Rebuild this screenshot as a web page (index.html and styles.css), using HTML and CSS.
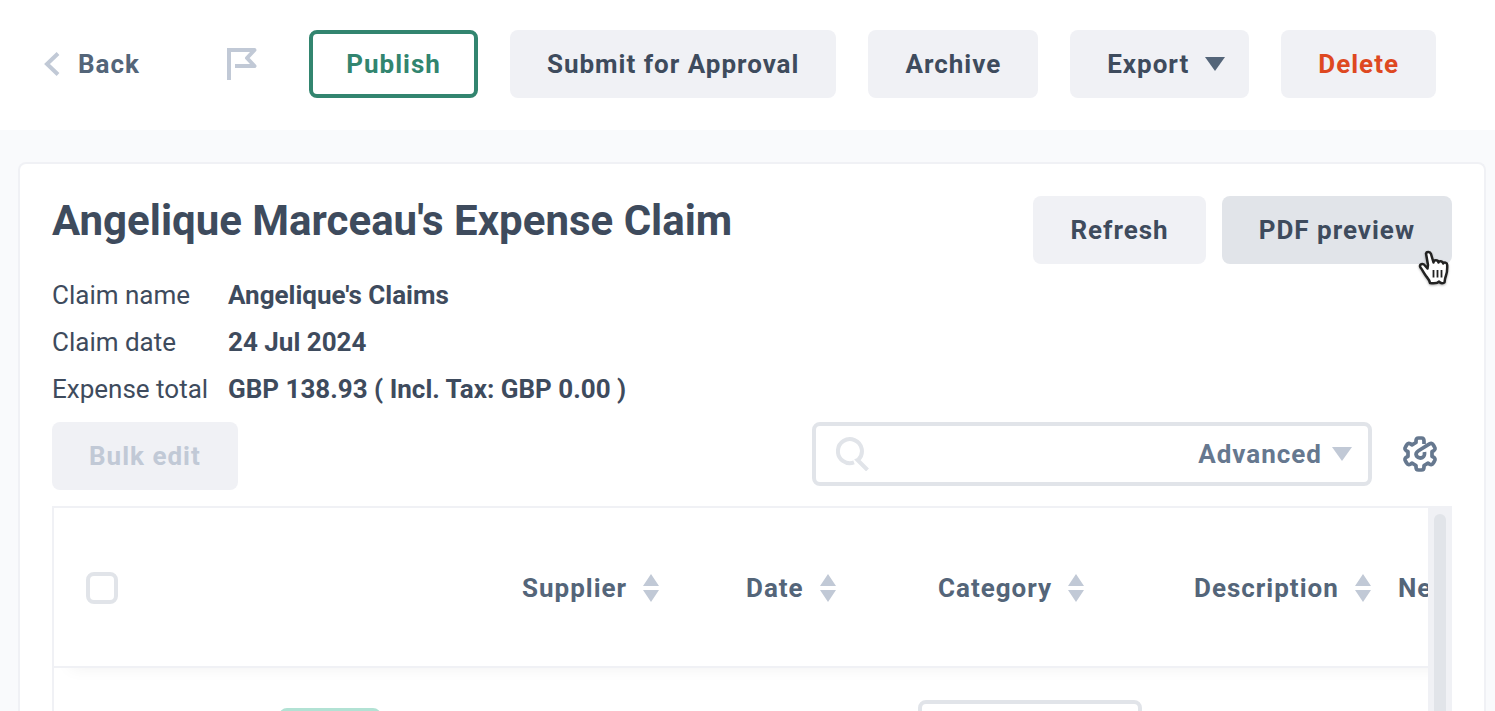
FILE: index.html
```html
<!DOCTYPE html>
<html lang="en">
<head>
    <meta charset="UTF-8">
    <meta name="viewport" content="width=device-width, initial-scale=1.0">
    <title>Expense Claim</title>
    <link rel="stylesheet" href="styles.css">
</head>
<body>
    <header class="topbar">
        <a class="back" href="#">
            <svg width="16" height="24" viewBox="0 0 16 24" fill="none" stroke="#c1c9d6" stroke-width="4"><path d="M14 1.500L3 12l11 10.500"/></svg>
            Back
        </a>
        <button class="icon-btn" type="button" aria-label="Flag">
            <svg width="30" height="32" viewBox="0 0 30 32" fill="none" stroke="#c1c9d6" stroke-width="4" stroke-linejoin="round"><path d="M2 32V2H27.500L20 10l7.500 8H8"/><path d="M0 0h8v4H0z" fill="#c1c9d6" stroke="none"/></svg>
        </button>
        <div class="actions">
            <button class="btn btn-publish" type="button">Publish</button>
            <button class="btn" type="button">Submit for Approval</button>
            <button class="btn" type="button">Archive</button>
            <button class="btn btn-menu" type="button">Export
                <svg width="20" height="14" viewBox="0 0 20 14"><path d="M0 0h20L10 14z" fill="#546579"/></svg>
            </button>
            <button class="btn btn-delete" type="button">Delete</button>
        </div>
    </header>

    <main class="card">
        <div class="card-head">
            <h1>Angelique Marceau's Expense Claim</h1>
            <div class="card-buttons">
                <button class="btn" type="button">Refresh</button>
                <button class="btn btn-active" type="button">PDF preview
                    <svg class="pointer" width="32" height="36" viewBox="0 0 32 36"><path d="M8 3.500C8.500 1.500 12 1.500 13 4l2.500 8.500c0-3 4.500-3 5 0 .5-2 4.200-1.700 4.700 1 .8-1.700 4 -1.200 4 1.500 0 4 .3 7-1.200 10.500-1 2.500-1.200 3-1.500 7-2 1-4 1-5.500-1-1.500 2-5 2-9 1.500-.5-3-2-4.500-4-7C5.500 22.500 4.500 20 2.500 17.500 1 15 3.500 13 6 14.500l3.500 4L10 15z" fill="#fff" stroke="#222" stroke-width="2.500" stroke-linejoin="round"/><path d="M15.500 20v7.500M19.500 20v7.500M23.500 20v7.500" stroke="#222" stroke-width="1.800"/></svg>
                </button>
            </div>
        </div>

        <dl class="details">
            <dt>Claim name</dt>
            <dd>Angelique's Claims</dd>
            <dt>Claim date</dt>
            <dd>24 Jul 2024</dd>
            <dt>Expense total</dt>
            <dd>GBP 138.93 ( Incl. Tax: GBP 0.00 )</dd>
        </dl>

        <div class="toolbar">
            <button class="btn" type="button" disabled>Bulk edit</button>
            <div class="toolbar-right">
                <div class="search">
                    <svg width="34" height="34" viewBox="0 0 34 34" fill="none" stroke="#e1e4e9" stroke-width="4"><path d="M18 25.400A12 12 0 1 1 22.500 22.500l-1 .5 10 10"/></svg>
                    <input type="text" aria-label="Search items">
                    <button class="advanced" type="button">Advanced
                        <svg width="20" height="14" viewBox="0 0 20 14"><path d="M0 0h20L10 14z" fill="#c1c9d6"/></svg>
                    </button>
                </div>
                <button class="icon-btn" type="button" aria-label="Settings">
                    <svg width="36" height="36" viewBox="-18 -18 36 36" fill="none" stroke="#66788f" stroke-width="3.700" stroke-linejoin="round"><path d="M4 -10V-13Q4 -16 1.500 -16H-1.500Q-4 -16 -4 -13V-11.500L-8 -9.200L-9.500 -10.100Q-12 -11.500 -13.200 -9.200L-14.500 -7Q-16 -4.600 -13.500 -3.200L-12 -2.300V2.300L-13.500 3.200Q-16 4.600 -14.500 7L-13.200 9.200Q-12 11.500 -9.500 10.100L-8 9.200L-4 11.500V13Q-4 16 -1.500 16H1.500Q4 16 4 13V11.500L8 9.200L9.500 10.100Q12 11.500 13.200 9.200L14.500 7Q16 4.600 13.500 3.200L12 2.300V-2.300L13.500 -3.200Q16 -4.600 14.500 -7L13.200 -9.200Q12 -11.500 9.500 -10.100L-1.500 -3.200Q-5 -1 -3.500 2Q-1 5 2.500 3.500Q5 2 4.500 -2"/></svg>
                </button>
            </div>
        </div>

        <div class="grid">
            <div class="grid-scroll">
                <table>
                    <colgroup>
                        <col class="col-check">
                        <col class="col-status">
                        <col class="col-supplier">
                        <col class="col-date">
                        <col class="col-category">
                        <col class="col-description">
                        <col class="col-net">
                    </colgroup>
                    <thead>
                        <tr>
                            <th class="check-cell"><input type="checkbox" aria-label="Select all"></th>
                            <th></th>
                            <th><button class="sort" type="button">Supplier <svg width="16" height="28" viewBox="0 0 16 28"><path d="M0 12L8 0l8 12zM0 16h16L8 28z"/></svg></button></th>
                            <th><button class="sort" type="button">Date <svg width="16" height="28" viewBox="0 0 16 28"><path d="M0 12L8 0l8 12zM0 16h16L8 28z"/></svg></button></th>
                            <th><button class="sort" type="button">Category <svg width="16" height="28" viewBox="0 0 16 28"><path d="M0 12L8 0l8 12zM0 16h16L8 28z"/></svg></button></th>
                            <th><button class="sort" type="button">Description <svg width="16" height="28" viewBox="0 0 16 28"><path d="M0 12L8 0l8 12zM0 16h16L8 28z"/></svg></button></th>
                            <th><button class="sort" type="button">Net</button></th>
                        </tr>
                    </thead>
                    <tbody>
                        <tr>
                            <td></td>
                            <td class="status-cell"><span class="badge"></span></td>
                            <td></td>
                            <td></td>
                            <td><select class="category" aria-label="Category"><option></option></select></td>
                            <td></td>
                            <td></td>
                        </tr>
                    </tbody>
                </table>
            </div>
            <div class="scrollbar"><div class="scrollbar-thumb"></div></div>
        </div>
    </main>
</body>
</html>
```
FILE: styles.css
```css
* {
    box-sizing: border-box;
}
body {
    margin: 0;
    height: 100vh;
    overflow: hidden;
    display: flex;
    flex-direction: column;
    background-color: #f9fafc;
    font-family: Roboto, "Liberation Sans", sans-serif;
    font-size: 26px;
    color: #3e4b5d;
}
svg {
    display: block;
    flex: none;
}
button {
    font: inherit;
    color: inherit;
    background: none;
    border: none;
    padding: 0;
    cursor: pointer;
}

/* Buttons */
.btn,
.back,
.advanced,
.sort {
    display: flex;
    align-items: center;
    font-weight: bold;
    letter-spacing: 1px;
    white-space: nowrap;
}
.btn {
    position: relative;
    height: 68px;
    padding: 0 37px;
    border-radius: 8px;
    background-color: #f0f1f5;
}
.btn-publish {
    padding: 0 33px;
    border: 4px solid #32856f;
    background-color: #fff;
    color: #32856f;
}
.btn-menu {
    gap: 16px;
    padding-right: 24px;
}
.btn-delete {
    color: #de4821;
}
.btn-active {
    background-color: #e1e4e9;
}
.btn:disabled {
    color: #c1c9d6;
}
.pointer {
    position: absolute;
    right: 2px;
    bottom: -22px;
    filter: drop-shadow(0 1px 1px rgba(0, 0, 0, 0.3));
}

/* Top bar */
.topbar {
    flex: none;
    display: flex;
    align-items: center;
    height: 130px;
    padding: 0 59px 2px 44px;
    background-color: #fff;
}
.back {
    gap: 18px;
    color: #546579;
    text-decoration: none;
}
.topbar .icon-btn {
    margin-left: 87px;
}
.actions {
    display: flex;
    gap: 32px;
    margin-left: auto;
}

/* Claim card */
.card {
    flex: 1;
    min-height: 0;
    display: flex;
    flex-direction: column;
    margin: 32px 9px 0 18px;
    padding: 32px 32px 0;
    border: 2px solid #f0f1f5;
    border-bottom: none;
    border-radius: 8px 8px 0 0;
    background-color: #fff;
}
.card-head {
    display: flex;
    justify-content: space-between;
    align-items: flex-start;
}
h1 {
    margin: 0;
    font-size: 42px;
    line-height: 50px;
}
.card-buttons {
    display: flex;
    gap: 16px;
}
.details {
    display: grid;
    grid-template-columns: 160px 1fr;
    column-gap: 16px;
    margin: 8px 0 9px;
    line-height: 47px;
}
.details dt {
    white-space: nowrap;
}
.details dd {
    margin: 0;
    font-weight: bold;
}

/* Search and settings */
.toolbar {
    display: flex;
    justify-content: space-between;
    align-items: flex-start;
    margin-bottom: 16px;
}
.toolbar-right {
    display: flex;
    align-items: center;
    gap: 30px;
    padding-right: 14px;
}
.search {
    display: flex;
    align-items: center;
    width: 560px;
    height: 64px;
    padding: 0 16px 0 20px;
    border: 4px solid #e1e4e9;
    border-radius: 8px;
}
.search input {
    flex: 1;
    min-width: 0;
    margin: 0 12px;
    border: none;
    outline: none;
    background: none;
    font: inherit;
}
.advanced {
    gap: 10px;
    color: #66788f;
}

/* Items table */
.grid {
    flex: 1;
    min-height: 0;
    display: flex;
}
.grid-scroll {
    flex: 1;
    overflow: hidden;
    border: 2px solid #f0f1f5;
    border-width: 2px 0 0 2px;
}
table {
    width: 1600px;
    table-layout: fixed;
    border-spacing: 0;
}
.col-check,
.col-status,
.col-supplier {
    width: 224px;
}
.col-date {
    width: 192px;
}
.col-category {
    width: 256px;
}
.col-description {
    width: 204px;
}
thead tr {
    box-shadow: 0 16px 16px -16px rgba(0, 0, 0, 0.06);
}
th {
    height: 160px;
    padding: 2px 0 0 20px;
    border-bottom: 2px solid #f0f1f5;
    text-align: left;
}
th.check-cell {
    padding-left: 32px;
}
input[type="checkbox"] {
    appearance: none;
    display: block;
    width: 32px;
    height: 32px;
    margin: 0;
    border: 4px solid #e1e4e9;
    border-radius: 8px;
    background-color: #fff;
}
.sort {
    gap: 16px;
    color: #546579;
}
.sort svg {
    fill: #c1c9d6;
}
td {
    padding: 32px 0;
}
.status-cell {
    padding-left: 1px;
}
.badge {
    display: block;
    width: 102px;
    height: 48px;
    border-radius: 8px;
    background-color: #b2e2d4;
}
.category {
    display: block;
    width: 224px;
    height: 64px;
    border: 4px solid #e1e4e9;
    border-radius: 8px;
    background-color: #fff;
    appearance: none;
}
.scrollbar {
    width: 24px;
    padding: 8px 6px 0;
    background-color: #f0f1f5;
}
.scrollbar-thumb {
    height: 100%;
    border-radius: 6px 6px 0 0;
    background-color: #e1e4e9;
}
```
